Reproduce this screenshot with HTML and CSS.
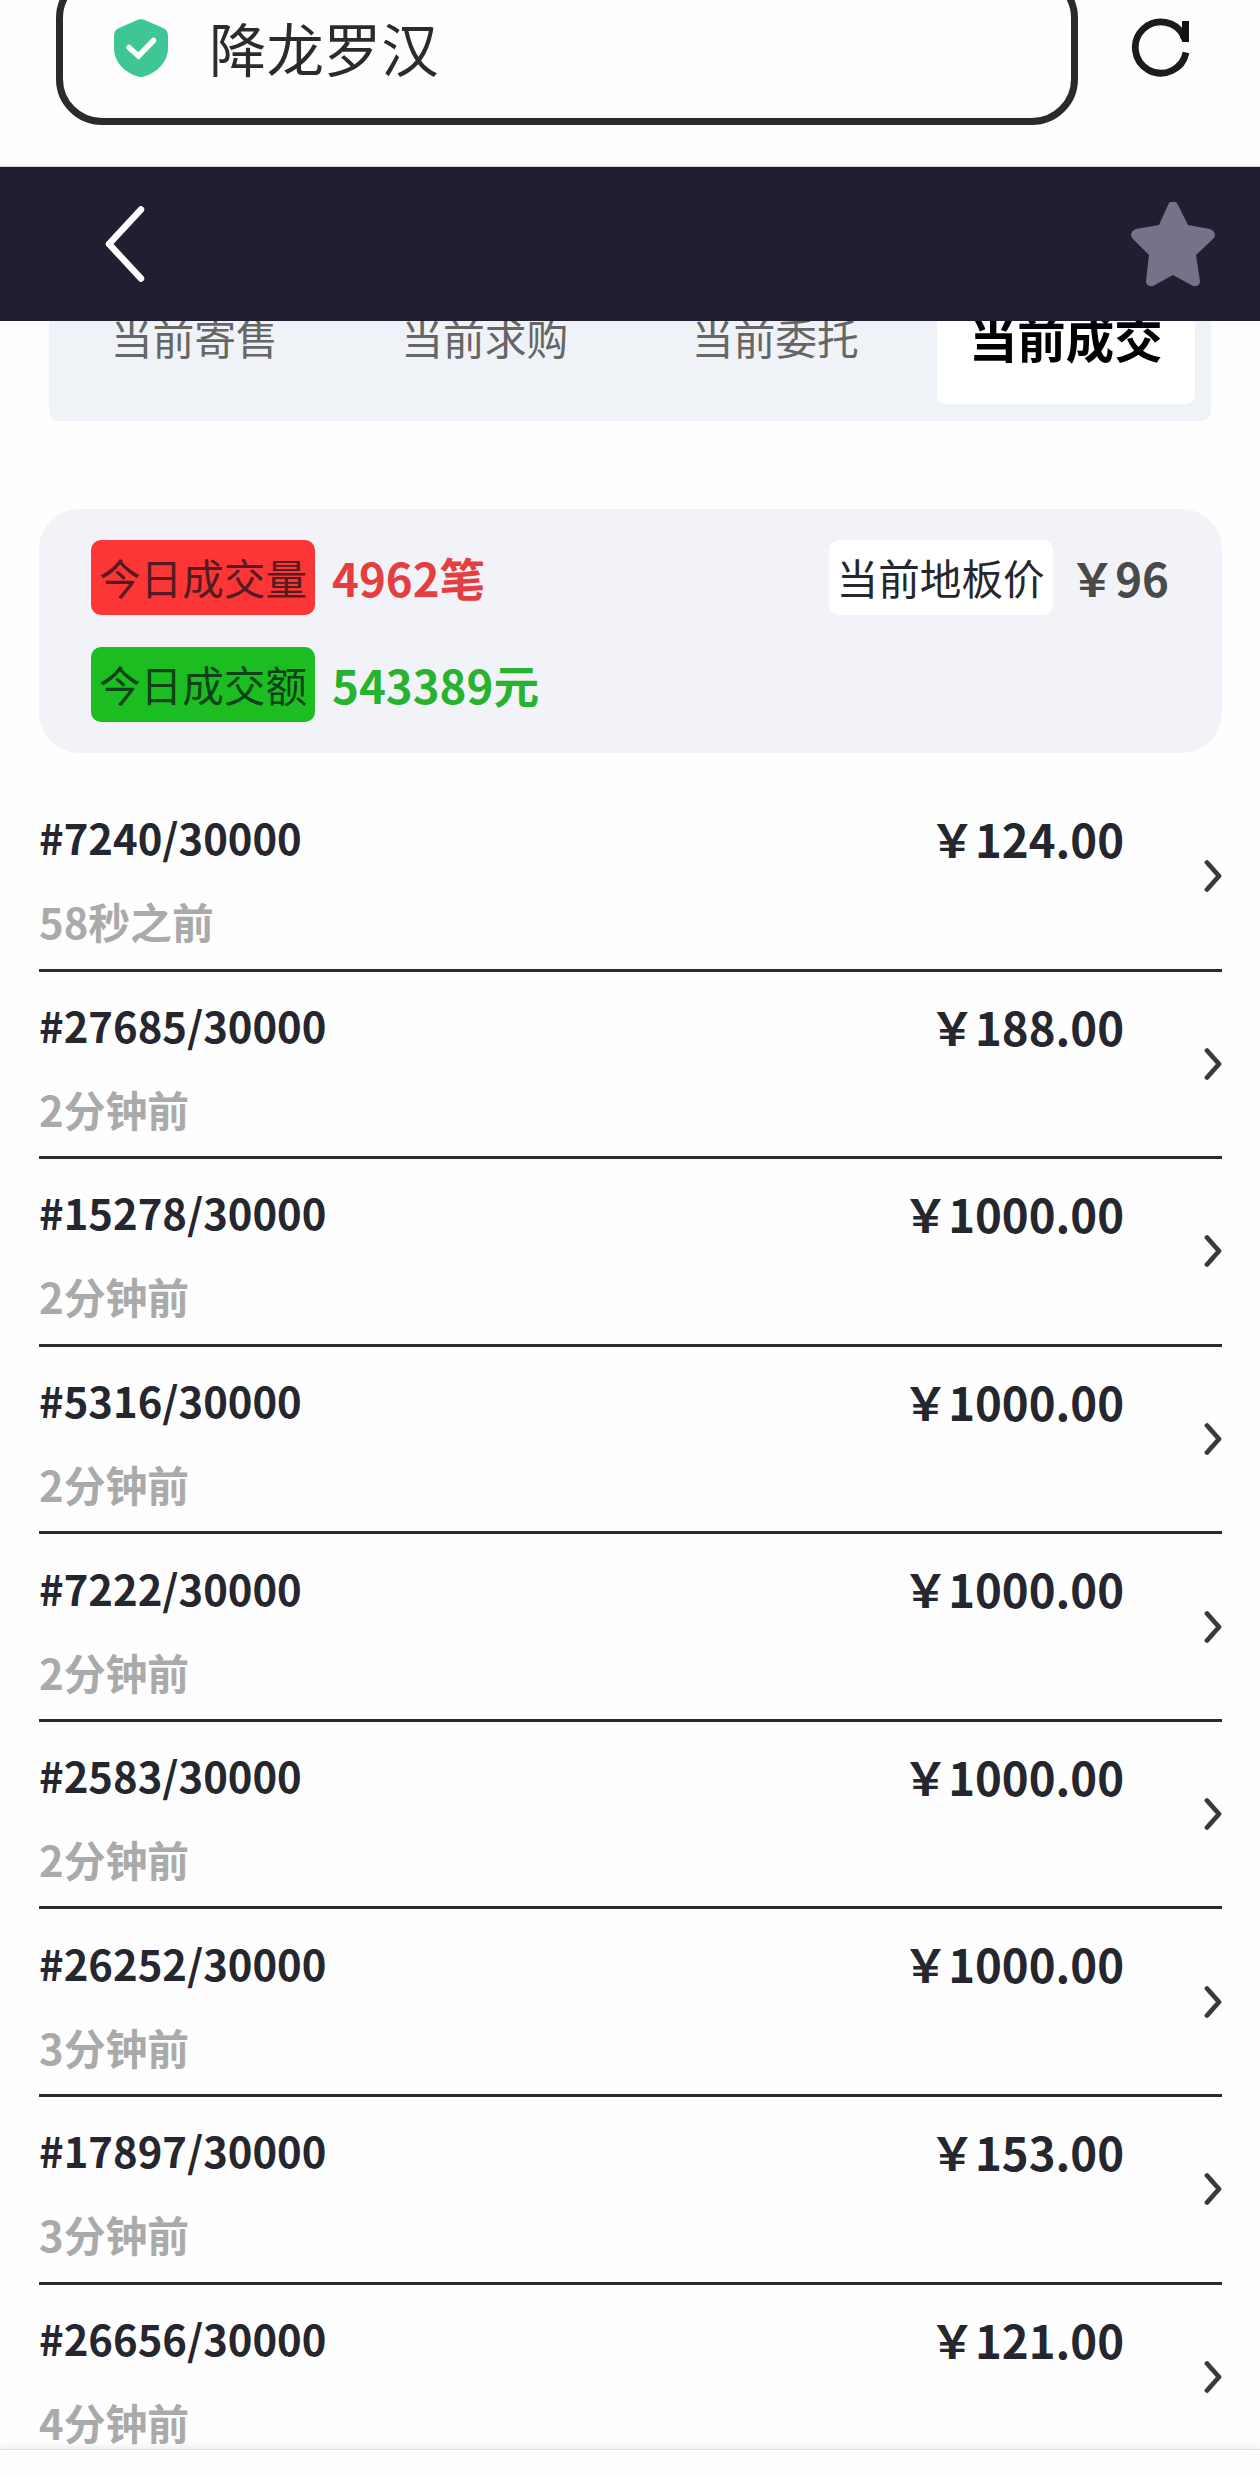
FILE: index.html
```
<!DOCTYPE html>
<html lang="zh-CN">
<head>
  <meta charset="UTF-8" />
  <meta name="viewport" content="width=device-width, initial-scale=1.0" />
  <title>降龙罗汉</title>
  <link rel="stylesheet" href="styles.css">
</head>
<body>
  <div class="browser-bar">
    <div class="address">
      <svg class="shield" viewBox="0 0 54 58">
        <path d="M22 1.500Q27-1 32 1.500L49 9Q54 11 54 17V29C54 44 42 54 30 57.500Q27 58.500 24 57.500C12 54 0 44 0 29V17Q0 11 5 9Z" fill="#3ec694" />
        <path d="M15 28.500L24.500 37L39.500 21.500" fill="none" stroke="#fff" stroke-width="5.500" stroke-linecap="round" />
      </svg>
      <span>降龙罗汉</span>
    </div>
    <svg class="refresh" viewBox="0 0 60 60">
      <path d="M55 34.500A25.600 25.600 0 1 1 53 18.500" fill="none" stroke="#1b1b1b" stroke-width="6.800" />
      <path d="M51 3H58V24H51.500L49 19L51 16Z" fill="#111" />
    </svg>
  </div>

  <header>
    <svg class="back" viewBox="0 0 42 78">
      <path d="M37 4.500L5 39L37 73.500" fill="none" stroke="#fff" stroke-width="6.500" stroke-linecap="round" stroke-linejoin="round" />
    </svg>
    <svg class="star" viewBox="0 0 84 86">
      <path d="M39 1H45Q46 2 47 4L57 24L79 28Q86 31 83 37L65 54L69 80Q69 86 62 85L42 74L22 85Q15 86 15 80L18 54L1 37Q-2 31 5 28L28 24L37 4Q38 2 39 1Z" fill="#76728a" />
    </svg>
  </header>

  <main>
    <div class="tabs">
      <div class="tab">当前寄售</div>
      <div class="tab">当前求购</div>
      <div class="tab">当前委托</div>
      <div class="tab active">当前成交</div>
    </div>

    <div class="summary">
      <div class="summary-row">
        <div class="stat red"><span class="tag">今日成交量</span><b>4962笔</b></div>
        <div class="stat"><span class="tag">当前地板价</span><b>￥96</b></div>
      </div>
      <div class="summary-row">
        <div class="stat green"><span class="tag">今日成交额</span><b>543389元</b></div>
      </div>
    </div>

    <ul class="deals" id="deals"></ul>
  </main>

  <footer></footer>

  <script>
    const deals = [
      ['#7240/30000', '58秒之前', '124.00'],
      ['#27685/30000', '2分钟前', '188.00'],
      ['#15278/30000', '2分钟前', '1000.00'],
      ['#5316/30000', '2分钟前', '1000.00'],
      ['#7222/30000', '2分钟前', '1000.00'],
      ['#2583/30000', '2分钟前', '1000.00'],
      ['#26252/30000', '3分钟前', '1000.00'],
      ['#17897/30000', '3分钟前', '153.00'],
      ['#26656/30000', '4分钟前', '121.00']
    ];

    document.getElementById('deals').innerHTML = deals.map(([no, time, price]) => `
      <li>
        <div class="info">
          <div class="no">${no}</div>
          <div class="time">${time}</div>
        </div>
        <div class="price">￥${price}</div>
        <svg class="arrow" viewBox="0 0 18 34">
          <path d="M3 3.500L15 17L3 30.500" fill="none" stroke="#3a3a3a" stroke-width="4.800" stroke-linecap="round" stroke-linejoin="round" />
        </svg>
      </li>`).join('');
  </script>
</body>
</html>
```
FILE: styles.css
```
* {
  box-sizing: border-box;
}
body {
  font-family: 'Noto Sans CJK SC', sans-serif;
  background: #fefefe;
  color: #25262e;
  margin: 0;
  height: 2476px;
  overflow: hidden;
  display: flex;
  flex-direction: column;
}
svg {
  display: block;
  flex: none;
}
.browser-bar {
  height: 167px;
  flex: none;
  padding: 0 69px 0 56px;
  border-bottom: 1px solid #d8d8dc;
  display: flex;
  justify-content: space-between;
  overflow: hidden;
}
.address {
  width: 1022px;
  height: 153px;
  margin-top: -28px;
  padding-left: 51px;
  border: 7px solid #2b2b2b;
  border-radius: 46px;
  display: flex;
  align-items: center;
  gap: 41px;
  font-size: 57.4px;
  line-height: 80px;
  color: #2b2b2b;
}
.address span {
  padding-bottom: 4px;
}
.shield {
  width: 54px;
  height: 58px;
  margin-bottom: 2px;
}
.refresh {
  width: 60px;
  height: 60px;
  margin-top: 18px;
}
header {
  height: 154px;
  flex: none;
  background: #201e30;
  padding: 0 45px 0 104px;
  display: flex;
  align-items: center;
  justify-content: space-between;
  position: relative;
  z-index: 10;
}
.back {
  width: 42px;
  height: 78px;
}
.star {
  width: 84px;
  height: 86px;
}
main {
  flex: 1;
  min-height: 0;
  overflow: visible;
}
/* tabs are scrolled half under the header */
.tabs {
  margin: -60px 49px 0;
  height: 160px;
  padding: 16px 0 17px;
  background: #eff2f6;
  border-radius: 9px;
  display: flex;
}
.tab {
  flex: 1;
  margin: 0 16px;
  padding-bottom: 8px;
  display: flex;
  align-items: center;
  justify-content: center;
  white-space: nowrap;
  font-size: 41.8px;
  color: #666;
}
.tab.active {
  background: #fff;
  border-radius: 9px;
  font-size: 48.4px;
  font-weight: bold;
  color: #000;
}
.summary {
  margin: 88px 38px 0 39px;
  height: 244px;
  padding: 31px 53px 31px 52px;
  background: #f2f3f8;
  border-radius: 40px;
  display: flex;
  flex-direction: column;
  justify-content: space-between;
}
.summary-row {
  display: flex;
  justify-content: space-between;
}
.stat {
  display: flex;
  align-items: center;
  gap: 17px;
  height: 75px;
  line-height: 75px;
}
.stat b {
  font-size: 45.6px;
  color: #4a4a4a;
}
.tag {
  padding: 0 8px;
  background: #fff;
  border-radius: 10px;
  font-size: 41.6px;
}
.red .tag {
  background: #fc3636;
  color: #521c20;
}
.red b {
  color: #e53e41;
}
.green .tag {
  background: #1cbd20;
  color: #0c4218;
}
.green b {
  color: #27b32d;
}
.deals {
  list-style: none;
  margin: 31px 38px 0 39px;
  padding: 0;
}
.deals li {
  height: 187.57px;
  border-bottom: 3px solid #2b2b2b;
  display: flex;
  align-items: center;
  font-weight: bold;
}
.info {
  flex: 1;
  padding-top: 6px;
  font-size: 41.8px;
}
.no {
  line-height: 84px;
}
.time {
  line-height: 84px;
  color: #aaa;
}
.price {
  align-self: flex-start;
  line-height: 108px;
  font-size: 45.5px;
}
.arrow {
  width: 18px;
  height: 34px;
  margin-left: 80px;
}
footer {
  height: 27px;
  flex: none;
  background: #fefefe;
  border-top: 1px solid #e2e2e2;
  box-shadow: 0 -2px 6px rgba(0, 0, 0, 0.08);
  position: relative;
}
```
